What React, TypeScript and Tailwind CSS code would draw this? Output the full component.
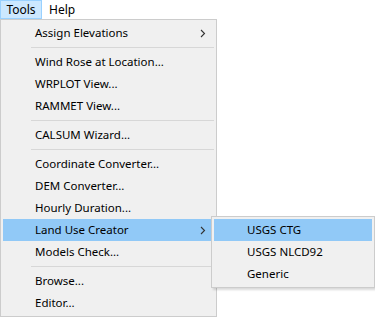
const menu: ({label: string, sub?: boolean, active?: boolean} | 'sep')[] = [
    {label: 'Assign Elevations', sub: true},
    'sep',
    {label: 'Wind Rose at Location...'},
    {label: 'WRPLOT View...'},
    {label: 'RAMMET View...'},
    'sep',
    {label: 'CALSUM Wizard...'},
    'sep',
    {label: 'Coordinate Converter...'},
    {label: 'DEM Converter...'},
    {label: 'Hourly Duration...'},
    {label: 'Land Use Creator', sub: true, active: true},
    {label: 'Models Check...'},
    'sep',
    {label: 'Browse...'},
    {label: 'Editor...'},
]

const landUse = ['USGS CTG', 'USGS NLCD92', 'Generic']

function Chevron() {
    return <svg width="6" height="9" viewBox="0 0 6 9" className="absolute right-[8px] top-[7px]">
        <path d="M1 1 L4.5 4.5 L1 8" fill="none" stroke="#333" strokeWidth="1.1"/>
    </svg>
}

export default function App() {
    return <div className="w-[375px] h-[317px] bg-white text-black text-[11.5px] leading-[22px] overflow-hidden relative"
                style={{fontFamily: '"Noto Sans", "Open Sans", sans-serif'}}>
        <div className="flex h-[19px] items-center text-[12px]">
            <div className="h-[19px] w-[42px] bg-[#cce8ff] border border-[#99d1ff] flex items-center justify-center">Tools</div>
            <div className="px-[7px]">Help</div>
        </div>
        <div className="w-[217px] h-[298px] bg-[#f0f0f0] border border-[#cccccc] p-[2px]">
            {menu.map((m, i) => m === 'sep'
                ? <div key={i} className="h-[7px] flex items-center pl-[28px]">
                    <div className="h-px w-full bg-[#d7d7d7]"/>
                </div>
                : <div key={i}
                       className={`relative h-[22px] pl-[32px] ${m.active ? 'bg-[#91c9f7]' : ''}`}>
                    {m.label}
                    {m.sub && <Chevron/>}
                </div>)}
        </div>
        <div className="absolute left-[211px] top-[216px] w-[164px] h-[72px] bg-[#f0f0f0] border border-[#cccccc] p-[2px] shadow-[2px_2px_2px_rgba(0,0,0,0.15)]">
            {landUse.map((l, i) => <div key={l}
                                        className={`h-[22px] pl-[33px] ${i === 0 ? 'bg-[#91c9f7]' : ''}`}>{l}</div>)}
        </div>
    </div>
}
